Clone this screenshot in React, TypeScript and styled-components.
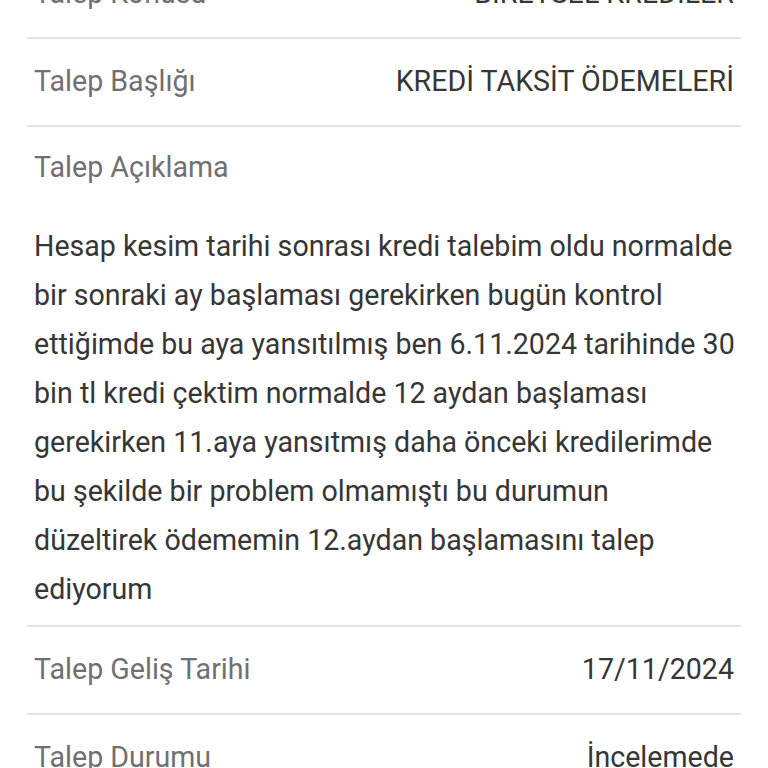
import React from "react";
import styled, { createGlobalStyle } from "styled-components";

const GlobalStyle = createGlobalStyle`
  html, body {
    margin: 0;
    padding: 0;
    background: #ffffff;
  }
  body {
    font-family: "Roboto", "Noto Sans", sans-serif;
    -webkit-font-smoothing: antialiased;
  }
`;

const Container = styled.div`
  width: 768px;
  height: 768px;
  overflow: hidden;
  background: #ffffff;
`;

const List = styled.div`
  margin-top: -49px;
  padding: 0 27px;
`;

const Row = styled.div`
  display: flex;
  justify-content: space-between;
  align-items: center;
  height: 88px;
  box-sizing: border-box;
  padding: 0 7px 2px;
  border-bottom: 2px solid #e2e2e2;
`;

const Label = styled.span`
  font-size: 28.6px;
  line-height: 49px;
  color: #707070;
`;

const Value = styled.span`
  font-size: 28.6px;
  line-height: 49px;
  color: #363636;
  text-align: right;
`;

const Description = styled.div`
  box-sizing: border-box;
  height: 500px;
  padding: 16px 7px 0;
  border-bottom: 2px solid #e2e2e2;
`;

const Paragraph = styled.p`
  margin: 30px 0 0;
  font-size: 28.6px;
  line-height: 49px;
  color: #363636;
`;

const Line = styled.span`
  display: block;
  white-space: nowrap;
`;

const rows = [
  { label: "Talep Konusu", value: "BİREYSEL KREDİLER" },
  { label: "Talep Başlığı", value: "KREDİ TAKSİT ÖDEMELERİ" },
];

const bottomRows = [
  { label: "Talep Geliş Tarihi", value: "17/11/2024" },
  { label: "Talep Durumu", value: "İncelemede" },
];

const descriptionLines = [
  "Hesap kesim tarihi sonrası kredi talebim oldu normalde",
  "bir sonraki ay başlaması gerekirken bugün kontrol",
  "ettiğimde bu aya yansıtılmış ben 6.11.2024 tarihinde 30",
  "bin tl kredi çektim normalde 12 aydan başlaması",
  "gerekirken 11.aya yansıtmış daha önceki kredilerimde",
  "bu şekilde bir problem olmamıştı bu durumun",
  "düzeltirek ödememin 12.aydan başlamasını talep",
  "ediyorum",
];

const App = () => {
  return (
    <Container>
      <GlobalStyle />
      <List>
        {rows.map((r) => (
          <Row key={r.label}>
            <Label>{r.label}</Label>
            <Value>{r.value}</Value>
          </Row>
        ))}
        <Description>
          <Label>Talep Açıklama</Label>
          <Paragraph>
            {descriptionLines.map((l, i) => (
              <Line key={i}>{l}</Line>
            ))}
          </Paragraph>
        </Description>
        {bottomRows.map((r) => (
          <Row key={r.label}>
            <Label>{r.label}</Label>
            <Value>{r.value}</Value>
          </Row>
        ))}
      </List>
    </Container>
  );
};

export default App;
